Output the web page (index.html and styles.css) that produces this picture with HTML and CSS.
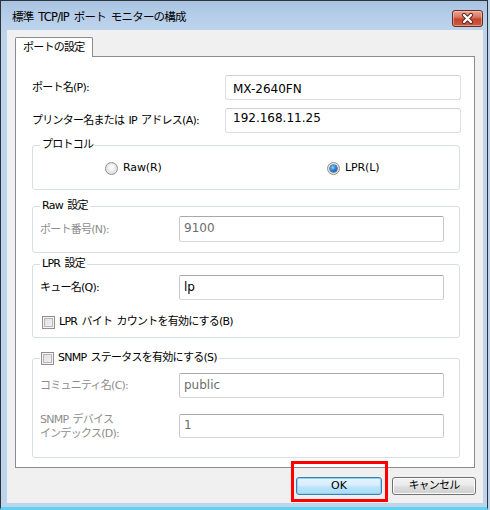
FILE: index.html
```html
<!DOCTYPE html>
<html lang="ja">
<head>
<meta charset="utf-8">
<title>標準 TCP/IP ポート モニターの構成</title>
<link rel="stylesheet" href="styles.css">
</head>
<body>
<div class="window">
  <div class="titlebar">
    <span class="title">標準 TCP/IP ポート モニターの構成</span>
    <span class="close">
      <svg width="29" height="15" viewBox="0 0 29 15">
        <path d="M11 4 L18 11 M18 4 L11 11" stroke="#5b2118" stroke-width="4.2" stroke-linecap="round" fill="none"/>
        <path d="M11 4 L18 11 M18 4 L11 11" stroke="#ffffff" stroke-width="2.4" stroke-linecap="round" fill="none"/>
      </svg>
    </span>
  </div>
  <div class="client">
    <div class="tab">ポートの設定</div>
    <div class="panel">
      <div class="form-grid">
        <span class="label">ポート名(P):</span>
        <div class="textbox pale t1">MX-2640FN</div>
        <span class="label">プリンター名または IP アドレス(A):</span>
        <div class="textbox pale t2">192.168.11.25</div>
      </div>

      <fieldset class="group g-proto">
        <legend>プロトコル</legend>
        <div class="radios">
          <span class="opt"><span class="radio"></span>Raw(R)</span>
          <span class="opt"><span class="radio on"></span>LPR(L)</span>
        </div>
      </fieldset>

      <fieldset class="group g-raw">
        <legend>Raw 設定</legend>
        <div class="row r-raw">
          <span class="label dis">ポート番号(N):</span>
          <div class="textbox dis h26">9100</div>
        </div>
      </fieldset>

      <fieldset class="group g-lpr">
        <legend>LPR 設定</legend>
        <div class="row r-lp">
          <span class="label">キュー名(Q):</span>
          <div class="textbox">lp</div>
        </div>
        <div class="check-row">
          <span class="check"></span>LPR バイト カウントを有効にする(B)
        </div>
      </fieldset>

      <fieldset class="group g-snmp">
        <legend class="check-legend"><span class="check"></span>SNMP ステータスを有効にする(S)</legend>
        <div class="row r-comm">
          <span class="label dis">コミュニティ名(C):</span>
          <div class="textbox dis">public</div>
        </div>
        <div class="row r-idx">
          <span class="label dis two">SNMP デバイス<br>インデックス(D):</span>
          <div class="textbox dis h24">1</div>
        </div>
      </fieldset>
    </div>
    <div class="buttons">
      <span class="ok-wrap">
        <span class="btn btn-ok">OK</span>
        <span class="highlight"></span>
      </span>
      <span class="btn btn-cancel">キャンセル</span>
    </div>
  </div>
</div>
</body>
</html>
```
FILE: styles.css
```css
html, body {
  margin: 0;
  padding: 0;
}
body {
  width: 490px;
  height: 510px;
  overflow: hidden;
  background: #bcd3ea;
  font-family: "DejaVu Sans", "Noto Sans CJK JP", sans-serif;
  font-size: 11px;
  letter-spacing: -0.75px;
  word-spacing: 1.5px;
  color: #000;
}
.window {
  box-sizing: border-box;
  width: 488px;
  height: 510px;
  border: 1px solid #2e3338;
  border-bottom: 3px solid #5fd2ef;
  padding: 0 4px 0 6px;
  background: linear-gradient(#a7c3e2 0px, #b5cde8 14px, #bdd4ec 30px, #bdd4ec 100%);
  display: flex;
  flex-direction: column;
}
.titlebar {
  height: 29px;
  box-sizing: border-box;
  padding: 9px 0 0 5px;
  display: flex;
  justify-content: space-between;
  align-items: flex-start;
}
.title {
  line-height: 14px;
  font-size: 11.5px;
  letter-spacing: -0.8px;
  word-spacing: 2px;
  color: #000;
}
.close {
  box-sizing: border-box;
  width: 31px;
  height: 17px;
  border: 1px solid #6a2b22;
  border-radius: 3px;
  background: linear-gradient(#e8a593 0%, #d97a63 40%, #c4452c 55%, #cf5c42 100%);
  box-shadow: inset 0 0 0 1px rgba(255, 220, 210, 0.45);
  display: flex;
  align-items: center;
  justify-content: center;
}
.close svg {
  display: block;
}
.client {
  height: 473px;
  box-sizing: border-box;
  background: #f0f0f0;
  padding: 7px 7px 0 8px;
  display: flex;
  flex-direction: column;
}
.tab {
  position: relative;
  z-index: 1;
  box-sizing: border-box;
  width: 78px;
  height: 20px;
  margin-bottom: -1px;
  border: 1px solid #898c95;
  border-bottom: 0;
  background: #fff;
  padding-left: 7px;
  line-height: 19px;
  border-radius: 2px 2px 0 0;
}
.panel {
  box-sizing: border-box;
  width: 460px;
  height: 412px;
  border: 1px solid #898c95;
  background: #fff;
  padding: 0 13px 0 16px;
}
.form-grid {
  margin-top: 18px;
  display: grid;
  grid-template-columns: 193px 236px;
  grid-auto-rows: 25px;
  row-gap: 8px;
  align-items: center;
}
.label {
  line-height: 15px;
  white-space: nowrap;
}
.label.dis {
  color: #8d8d8d;
}
.label.two {
  line-height: 14px;
  padding-top: 3px;
}
.textbox {
  box-sizing: border-box;
  height: 25px;
  border: 1px solid #abadb3;
  border-color: #a8a8a8 #c9c9c9 #d8d8d8 #c9c9c9;
  border-radius: 2px;
  background: #fff;
  padding: 0 4px;
  font-size: 12px;
  letter-spacing: 0;
  word-spacing: 0;
  line-height: 22px;
  white-space: nowrap;
  color: #000;
}
.textbox.pale {
  border: 1px solid #dcdde0;
  border-top-color: #d0d1d4;
  border-radius: 3px;
  padding-left: 7px;
}
.textbox.t1 {
  line-height: 26px;
}
.textbox.t2 {
  line-height: 18px;
}
.textbox.dis {
  color: #6d6d6d;
}
.textbox.h26 {
  height: 26px;
  line-height: 23px;
}
.textbox.h24 {
  height: 24px;
  line-height: 21px;
}
.group {
  margin: 0 1px 0 0;
  border: 1px solid #d5dfe5;
  border-radius: 3px;
  padding: 0 15px 0 7px;
  min-width: 0;
}
.group legend {
  padding: 0 2px;
  line-height: 16px;
  height: 16px;
}
.g-proto { margin-top: 4px; }
.g-raw { margin-top: 8px; }
.g-lpr { margin-top: 3px; }
.g-snmp { margin-top: 12px; }

.radios {
  margin: 7px 0 13px 0;
  padding-left: 65px;
  height: 16px;
  display: grid;
  grid-template-columns: 222px auto;
  align-items: center;
}
.opt {
  display: flex;
  align-items: center;
  gap: 5px;
  line-height: 16px;
  letter-spacing: -0.1px;
}
.radio {
  box-sizing: border-box;
  width: 13px;
  height: 13px;
  border-radius: 50%;
  border: 1px solid #8e8f8f;
  background: radial-gradient(circle at 50% 40%, #ffffff 0%, #f0f0f0 35%, #c9c9c9 100%);
  box-shadow: inset 0 0 0 1px #e6e6e6;
  display: flex;
  align-items: center;
  justify-content: center;
}
.radio.on::after {
  content: "";
  width: 7px;
  height: 7px;
  border-radius: 50%;
  background: radial-gradient(circle at 40% 35%, #8fd0ff 0%, #2c86d6 45%, #0c3f7c 100%);
  box-shadow: 0 0 0 0.5px #0a2a50;
}
.row {
  display: grid;
  grid-template-columns: 139px 265px;
  align-items: center;
}
.r-raw { margin: 2px 0 10px 0; }
.r-lp { margin-top: 3px; }
.r-comm { margin-top: 7px; }
.r-idx { margin: 12px 0 16px 0; }

.check-row {
  margin: 14px 0 7px 2px;
  height: 16px;
  display: flex;
  align-items: center;
  gap: 4px;
  line-height: 16px;
}
.check {
  box-sizing: border-box;
  width: 13px;
  height: 13px;
  border: 1px solid #8e8f8f;
  background: linear-gradient(135deg, #dcdcdc 0%, #f4f4f4 100%);
  box-shadow: inset 0 0 0 1px #f4f4f4, inset 0 0 0 2px #b7b7b7;
  flex: none;
}
.group legend.check-legend {
  display: flex;
  align-items: center;
  gap: 4px;
  padding: 0 2px 0 1px;
}
.buttons {
  margin-top: 9px;
  display: flex;
  justify-content: flex-end;
  gap: 10px;
}
.ok-wrap {
  position: relative;
  display: block;
}
.btn {
  box-sizing: border-box;
  display: block;
  height: 18px;
  border-radius: 3px;
  text-align: center;
  line-height: 16px;
}
.btn-ok {
  width: 86px;
  border: 1px solid #3c7fb1;
  background: linear-gradient(#e5f4fc 0%, #d7eefb 45%, #bde4fa 55%, #a9dbf6 100%);
  box-shadow: inset 0 0 0 1px #8fd2f5;
  letter-spacing: 0;
}
.btn-cancel {
  width: 84px;
  border: 1px solid #707070;
  background: linear-gradient(#f2f2f2 0%, #ebebeb 45%, #dddddd 55%, #cfcfcf 100%);
  box-shadow: inset 0 0 0 1px #fbfbfb;
}
.highlight {
  position: absolute;
  left: -5px;
  top: -16px;
  width: 97px;
  height: 41px;
  box-sizing: border-box;
  border: 3px solid #ff0000;
  pointer-events: none;
}
```
